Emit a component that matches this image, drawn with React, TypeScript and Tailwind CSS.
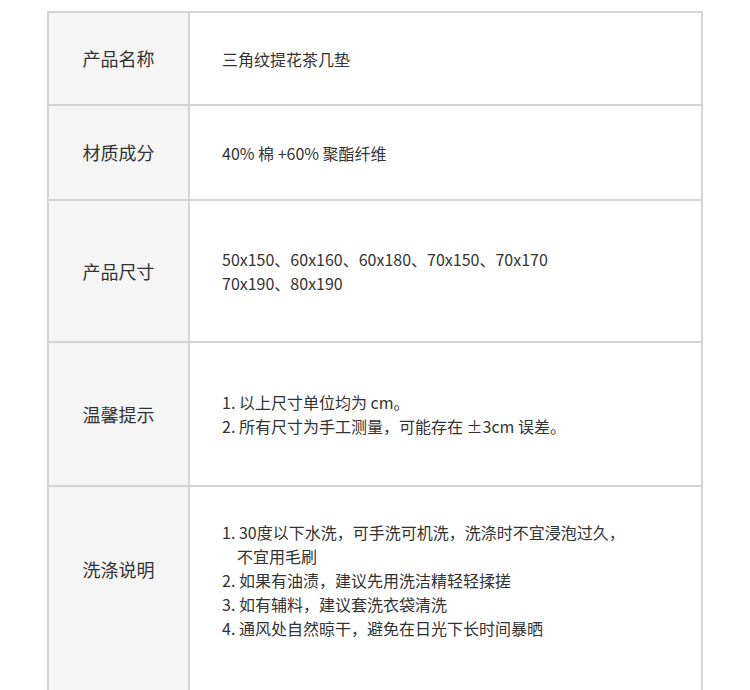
import React from "react";

const font = { fontFamily: '"Noto Sans CJK SC", "Noto Sans", sans-serif' };

export default function App() {
  return (
    <div className="w-[750px] h-[690px] overflow-hidden bg-white pt-[11px] pl-[47px] text-[#333]" style={font}>
      <div className="w-[656px] border-x-2 border-[#d4d4d4]">
        <div className="flex h-[93px] border-t-2 border-[#d4d4d4]">
          <div className="w-[141px] shrink-0 bg-[#f5f5f5] border-r-2 border-[#d4d4d4] flex items-center justify-center text-[18px]">产品名称</div>
          <div className="flex-1 pl-[32px] flex flex-col justify-center text-[16px] leading-[24px]">三角纹提花茶几垫</div>
        </div>
        <div className="flex h-[95px] border-t-2 border-[#d4d4d4]">
          <div className="w-[141px] shrink-0 bg-[#f5f5f5] border-r-2 border-[#d4d4d4] flex items-center justify-center text-[18px]">材质成分</div>
          <div className="flex-1 pl-[32px] flex flex-col justify-center text-[16px] leading-[24px]">40% 棉 +60% 聚酯纤维</div>
        </div>
        <div className="flex h-[142px] border-t-2 border-[#d4d4d4]">
          <div className="w-[141px] shrink-0 bg-[#f5f5f5] border-r-2 border-[#d4d4d4] flex items-center justify-center text-[18px]">产品尺寸</div>
          <div className="flex-1 pl-[32px] flex flex-col justify-center text-[16px] leading-[24px]">
            <div>50x150、60x160、60x180、70x150、70x170</div>
            <div>70x190、80x190</div>
          </div>
        </div>
        <div className="flex h-[144px] border-t-2 border-[#d4d4d4]">
          <div className="w-[141px] shrink-0 bg-[#f5f5f5] border-r-2 border-[#d4d4d4] flex items-center justify-center text-[18px]">温馨提示</div>
          <div className="flex-1 pl-[32px] flex flex-col justify-center text-[16px] leading-[24px]">
            <div>1. 以上尺寸单位均为 cm。</div>
            <div>2. 所有尺寸为手工测量，可能存在 ±3cm 误差。</div>
          </div>
        </div>
        <div className="flex h-[220px] border-t-2 border-[#d4d4d4]">
          <div className="w-[141px] shrink-0 bg-[#f5f5f5] border-r-2 border-[#d4d4d4] flex justify-center pt-[70px] text-[18px] leading-[24px]">洗涤说明</div>
          <div className="flex-1 pl-[32px] pt-[33px] text-[16px] leading-[24px]">
            <div>1. 30度以下水洗，可手洗可机洗，洗涤时不宜浸泡过久，</div>
            <div className="pl-[15px]">不宜用毛刷</div>
            <div>2. 如果有油渍，建议先用洗洁精轻轻揉搓</div>
            <div>3. 如有辅料，建议套洗衣袋清洗</div>
            <div>4. 通风处自然晾干，避免在日光下长时间暴晒</div>
          </div>
        </div>
      </div>
    </div>
  );
}
